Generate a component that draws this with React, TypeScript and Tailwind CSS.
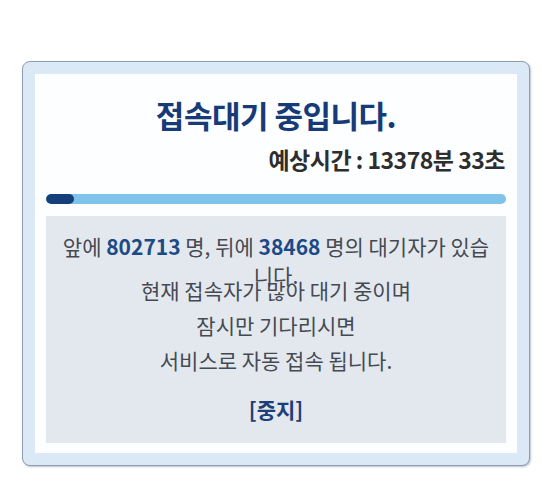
import React from 'react';

const font = { fontFamily: '"Noto Sans CJK KR", "Noto Sans", sans-serif' };

const WaitingQueue = () => {
  const ahead = 802713;
  const behind = 38468;
  const progress = 6; // percent done

  return (
    <div className="min-h-screen bg-white pt-[61px] pl-[22px]" style={font}>
      {/* Outer frame */}
      <div className="w-[508px] rounded-[8px] border border-[#8d9cae] bg-[#dbe8f5] p-[12px] shadow-[1px_1px_2px_rgba(60,80,110,0.35)]">
        {/* White panel */}
        <div className="bg-[#fdfeff] px-[11px] pt-[21px] pb-[10px]">
          <h1 className="text-center text-[31px] leading-[40px] font-bold text-[#173a78] tracking-[-0.5px]">
            접속대기 중입니다.
          </h1>
          <p className="mt-[10px] pr-[1px] text-right text-[23px] leading-[28px] font-bold text-[#2e2e2e] tracking-[-0.5px]">
            예상시간 : 13378분 33초
          </p>

          {/* Progress bar */}
          <div className="mt-[21px] h-[10px] w-full rounded-full bg-[#7fc3ea] overflow-hidden">
            <div className="h-full rounded-full bg-[#143f7a]" style={{ width: `${progress}%` }} />
          </div>

          {/* Message box */}
          <div className="mt-[12px] bg-[#e3e8ee] px-[8px] pt-[16px] pb-[16px] text-center text-[21px] text-[#454a52]">
            <p className="h-[41px] leading-[29px]">
              앞에 <span className="font-bold text-[#1c4a86]">{ahead}</span> 명, 뒤에{' '}
              <span className="font-bold text-[#1c4a86]">{behind}</span> 명의 대기자가 있습니다.
            </p>
            <p className="leading-[35px]">현재 접속자가 많아 대기 중이며</p>
            <p className="leading-[35px]">잠시만 기다리시면</p>
            <p className="leading-[35px]">서비스로 자동 접속 됩니다.</p>
            <button className="mt-[14px] leading-[35px] font-bold text-[#1c3f78]">[중지]</button>
          </div>
        </div>
      </div>
    </div>
  );
};

export default function App() {
  return <WaitingQueue />;
}
